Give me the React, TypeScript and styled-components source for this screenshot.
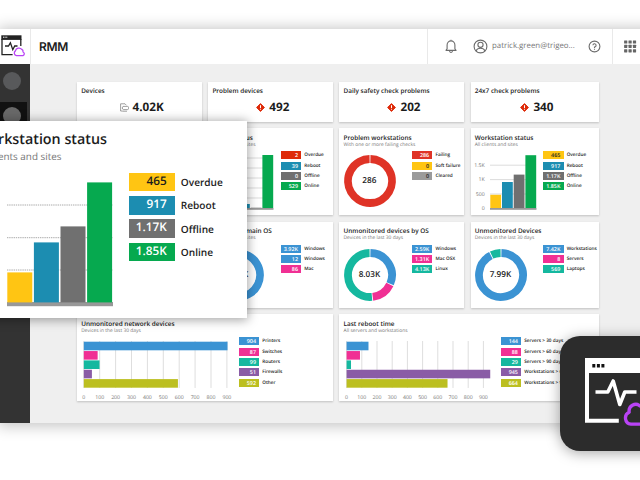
import React from "react";
import styled, { createGlobalStyle } from "styled-components";

const palette = {
  ink: "#1c1c1c",
  blue: "#3b93d3",
  teal: "#1c8db1",
  gray: "#707070",
  silver: "#9b9b9b",
  green: "#06a94f",
  yellow: "#ffc513",
  red: "#df3326",
  alert: "#de2b0a",
  pink: "#f03094",
  mint: "#15b89f",
  purple: "#8a5ca6",
  olive: "#bcbf20",
  brand: "#b943f5",
};

const GlobalStyle = createGlobalStyle`
  html, body { margin: 0; padding: 0; overflow: hidden; background: #fff; }
  * { box-sizing: border-box; }
  svg { display: block; flex: none; }
`;

const Page = styled.div`
  position: relative;
  width: 640px;
  height: 480px;
  padding-top: 28.5px;
  overflow: hidden;
  background: #fff;
  color: ${palette.ink};
  font-family: "Open Sans", "Noto Sans", sans-serif;
  text-rendering: geometricPrecision;
`;

const Window = styled.div`
  width: 660px;
  height: 394px;
  display: flex;
  flex-direction: column;
  background: #efefef;
  box-shadow: 0 1px 14px 2px rgba(0, 0, 0, 0.24);
`;

const TopBar = styled.header`
  display: flex;
  align-items: stretch;
  height: 35.5px;
  width: 640px;
  background: #fff;
`;

const LogoCell = styled.div`
  width: 31px;
  padding-top: 5.5px;
  border-right: 1px solid #e9e9e9;
`;

const AppName = styled.h1`
  flex: 1;
  margin: 0;
  padding-left: 8px;
  line-height: 35.5px;
  font-family: Inter, "Open Sans", sans-serif;
  font-size: 12px;
  font-weight: 600;
  letter-spacing: -0.3px;
`;

const Account = styled.div`
  display: flex;
  align-items: center;
  width: 185px;
  padding: 0 11px 0 16px;
  border-left: 1px solid #e9e9e9;
`;

const Email = styled.span`
  flex: 1;
  margin-left: 4.3px;
  font-size: 7.85px;
  color: #777;
  white-space: nowrap;
`;

const AppsCell = styled.div`
  display: flex;
  align-items: center;
  width: 28px;
  padding-left: 11px;
  border-left: 1px solid #e9e9e9;
`;

const Main = styled.div`
  display: flex;
  flex: 1;
  min-height: 0;
`;

const Sidebar = styled.nav`
  width: 30px;
  background: #333;
`;

const NavItem = styled.div<{ $active?: boolean }>`
  display: flex;
  align-items: ${(p) => (p.$active ? "flex-start" : "center")};
  width: 27px;
  height: ${(p) => (p.$active ? "30px" : "37.5px")};
  padding: ${(p) => (p.$active ? "5px 0 0 3px" : "0 0 4px 3px")};
  background: ${(p) => (p.$active ? "#111" : "transparent")};
`;

const NavDot = styled.span<{ $active?: boolean }>`
  width: 18px;
  height: 18px;
  border-radius: 50%;
  background: ${(p) => (p.$active ? "#696969" : "#58595b")};
`;

const Dashboard = styled.main`
  display: grid;
  grid-template-columns: 125px 125px 125px 128.5px;
  grid-template-rows: 40px 87px 86.5px 86.5px;
  gap: 6.3px 6.2px;
  padding: 18px 0 0 47.1px;
`;

const Card = styled.section<{ $wide?: boolean }>`
  grid-column: span ${(p) => (p.$wide ? 2 : 1)};
  min-width: 0;
  padding: 4.3px 0 0 4.1px;
  background: #fff;
  box-shadow: 0 0.5px 2px rgba(0, 0, 0, 0.2);
`;

const CardTitle = styled.h2`
  margin: 0;
  height: 9px;
  line-height: 9px;
  font-size: 6.4px;
  font-weight: 600;
  white-space: nowrap;
`;

const CardNote = styled.p`
  margin: 0;
  height: 6px;
  line-height: 6px;
  font-size: 4.9px;
  color: #777;
  white-space: nowrap;
`;

const Figure = styled.div`
  display: flex;
  align-items: center;
  justify-content: center;
  gap: 4px;
  height: 24px;
  font-size: 11.7px;
  font-weight: 700;
`;

const CardBody = styled.div`
  display: flex;
  padding-top: 2.7px;
`;

const LegendList = styled.ul`
  display: grid;
  gap: 2.3px;
  align-content: start;
  margin: 0;
  padding: 1px 0 0;
  list-style: none;
`;

const LegendRow = styled.li`
  display: flex;
  align-items: center;
  gap: 3px;
  height: 8px;
  font-size: 4.7px;
  font-weight: 600;
  line-height: 8px;
  white-space: nowrap;
`;

const Chip = styled.span<{ $color: string; $dark?: boolean }>`
  width: 20.3px;
  height: 8px;
  padding-right: 3.3px;
  text-align: right;
  font-size: 5.4px;
  background: ${(p) => p.$color};
  color: ${(p) => (p.$dark ? "#222" : "#fff")};
`;

const ChartText = styled.text`
  font-size: 5.2px;
  fill: #777;
`;

const DonutText = styled.text`
  font-size: 8.2px;
  font-weight: 600;
  fill: #1c1c1c;
  text-anchor: middle;
`;

const Callout = styled.section`
  position: absolute;
  top: 121px;
  left: -46px;
  width: 292.5px;
  height: 197px;
  padding: 9px 0 0 16px;
  background: #fff;
  box-shadow: 0 1px 10px 1px rgba(0, 0, 0, 0.36);
`;

const CalloutTitle = styled.h2`
  display: flex;
  justify-content: flex-end;
  margin: 0;
  width: 137px;
  height: 20px;
  line-height: 20px;
  font-size: 14.3px;
  font-weight: 600;
  white-space: nowrap;
`;

const CalloutNote = styled.p`
  display: flex;
  justify-content: flex-end;
  margin: 0;
  width: 91.5px;
  height: 13px;
  line-height: 13px;
  font-size: 9.9px;
  color: #777;
  white-space: nowrap;
`;

const CalloutBody = styled.div`
  display: flex;
  gap: 15px;
  padding: 9.9px 0 0 37px;
`;

const CalloutLegend = styled.ul`
  display: grid;
  gap: 4.9px;
  align-content: start;
  margin: 0;
  padding: 0;
  list-style: none;
`;

const CalloutRow = styled.li`
  display: flex;
  align-items: center;
  gap: 6px;
  height: 18.4px;
  font-size: 10.1px;
  font-weight: 600;
`;

const CalloutChip = styled.span<{ $color: string; $dark?: boolean }>`
  width: 46.3px;
  height: 18.4px;
  padding-right: 8px;
  line-height: 17px;
  text-align: right;
  font-size: 11.8px;
  background: ${(p) => p.$color};
  color: ${(p) => (p.$dark ? "#1c1c1c" : "#fff")};
`;

const Badge = styled.div`
  position: absolute;
  left: 560px;
  top: 336px;
  width: 116px;
  height: 114.5px;
  padding: 22px 0 0 24.5px;
  border-radius: 20px;
  background: #2c2c2c;
  box-shadow: 0 2px 14px rgba(0, 0, 0, 0.35);
`;

type LegendItem = { value: string; label: string; color: string; dark?: boolean };

function Legend({ items }: { items: LegendItem[] }) {
  return (
    <LegendList>
      {items.map((it, i) => (
        <LegendRow key={i}>
          <Chip $color={it.color} $dark={it.dark}>{it.value}</Chip>
          {it.label}
        </LegendRow>
      ))}
    </LegendList>
  );
}

type PanelProps = {
  title: string;
  note: string;
  legend: LegendItem[];
  wide?: boolean;
  children: React.ReactNode;
};

function Panel({ title, note, legend, wide, children }: PanelProps) {
  return (
    <Card $wide={wide}>
      <CardTitle>{title}</CardTitle>
      <CardNote>{note}</CardNote>
      <CardBody>
        {children}
        <Legend items={legend} />
      </CardBody>
    </Card>
  );
}

type Slice = { from: number; to: number; color: string };

function Donut({ label, slices }: { label: string; slices: Slice[] }) {
  const point = (t: number) => {
    const a = t * Math.PI * 2;
    return `${26 + 22 * Math.sin(a)} ${31 - 22 * Math.cos(a)}`;
  };
  return (
    <svg width="68.6" height="60" viewBox="0 0 68.6 60" overflow="visible">
      {slices.map((s, i) => (
        <path
          key={i}
          d={`M${point(s.from + 0.003)} A22 22 0 ${s.to - s.from > 0.5 ? 1 : 0} 1 ${point(s.to - 0.003)}`}
          fill="none"
          stroke={s.color}
          strokeWidth="7.8"
        />
      ))}
      <DonutText x="25.4" y="33.2">{label}</DonutText>
    </svg>
  );
}

type Column = { height: number; color: string };

function ColumnChart({ columns, lines, labels }: { columns: Column[]; lines: number[]; labels?: string[] }) {
  return (
    <svg width="68.6" height="62" viewBox="0 0 68.6 62" overflow="visible">
      {lines.map((y) => (
        <path key={y} d={`M15 ${y}H61`} stroke="#d8d8d8" strokeWidth=".9" />
      ))}
      {labels?.map((t, i) => (
        <ChartText key={t} x="9.7" y={17 + i * 14.4} textAnchor="end">{t}</ChartText>
      ))}
      {columns.map((c, i) => (
        <rect key={i} x={15.3 + i * 11.7} y={58 - c.height} width="10.8" height={c.height} fill={c.color} />
      ))}
      <rect x="15" y="58" width="46.5" height="1.8" fill="#989898" />
    </svg>
  );
}

type BarProps = { values: number[]; scale: number; width: number; left: number };
const barColors = [palette.blue, palette.pink, palette.mint, palette.purple, palette.olive];

function BarChart({ values, scale, width, left }: BarProps) {
  return (
    <svg width={width} height="64" viewBox={`0 0 ${width} 64`} overflow="visible">
      {Array.from({ length: 10 }, (_, i) => (
        <g key={i}>
          <path d={`M${left + i * 100 * scale} 5V52`} stroke="#dedede" strokeWidth="1" />
          <ChartText x={left + i * 100 * scale} y="62.6" textAnchor="middle">{i * 100}</ChartText>
        </g>
      ))}
      {values.map((v, i) => (
        <rect key={i} x={left} y={5.7 + i * 9.35} width={v * scale} height="8.6" fill={barColors[i]} />
      ))}
    </svg>
  );
}

function Alert() {
  return (
    <svg width="9" height="9" viewBox="0 0 9 9">
      <path d="M4.5.6 8.4 4.5 4.5 8.4.6 4.5Z" fill={palette.alert} stroke={palette.alert} strokeWidth="1" strokeLinejoin="round" />
      <path d="M4.5 2.2V5M4.5 5.8V6.7" stroke="#fff" strokeWidth="1" />
    </svg>
  );
}

function DeviceIcon() {
  return (
    <svg width="9" height="9" viewBox="0 0 9 9" fill="none" stroke="#777" strokeWidth=".7">
      <path d="M2.4 8H.6V.8H5L6.4 2.3" />
      <path d="M3 3.4H7.5Q8.5 3.4 8.5 4.5V5.5Q8.5 6.6 7.5 6.6H3.2Q2.3 6.2 2.3 5Q2.3 3.7 3 3.4ZM2.4 8.2H7" />
    </svg>
  );
}

function BrandIcon() {
  return (
    <svg width="26" height="23" viewBox="0 0 26 23" fill="none">
      <rect x="1.3" y="1.3" width="20.2" height="4.6" fill="#222" />
      <path d="M3 3.2H7.3" stroke="#fff" strokeWidth="1" strokeDasharray="1.1 .5" />
      <path d="M12.6 20.7H2V5M20.8 5V12" stroke="#222" strokeWidth="1.3" />
      <path d="M5 12H8.5L10.4 8.7L12.8 15.7L14.7 12H17.5" stroke="#222" strokeWidth="1.3" />
      <path d="M16.5 21.6A2.6 2.6 0 0 1 15.4 16.9A3.7 3.7 0 0 1 21.8 15.4A2.3 2.3 0 0 1 23 18A1.9 1.9 0 0 1 23 21.6Z" stroke={palette.brand} strokeWidth="1.3" strokeLinejoin="round" />
    </svg>
  );
}

function BadgeIcon() {
  return (
    <svg width="80" height="70" viewBox="0 0 80 70" fill="none">
      <path d="M0 0H70V15H4V60.8H33.8V64.8H0Z" fill="#fff" />
      <path d="M7.3 6H10.3V9.6H7.3ZM11.9 6H14.9V9.6H11.9ZM16.4 6H19.4V9.6H16.4Z" fill="#111" />
      <path d="M10.5 34H22.8L28.2 23L34.8 46.5L39.8 34H51.5" stroke="#fff" strokeWidth="3.6" strokeLinejoin="round" />
      <path d="M46 66.2A6.3 6.3 0 0 1 44.2 54.2A6.6 6.6 0 0 1 55 48A8 8 0 0 1 68 54A6 6 0 0 1 67 66.2Z" stroke={palette.brand} strokeWidth="3.3" strokeLinejoin="round" />
    </svg>
  );
}

const BellIcon = styled.svg`
  margin-right: 14.7px;
`;

function HeaderBar() {
  return (
    <TopBar>
      <LogoCell><BrandIcon /></LogoCell>
      <AppName>RMM</AppName>
      <Account>
        <BellIcon width="14" height="15" viewBox="0 0 14 15" fill="none" stroke="#6b6b6b" strokeWidth="1.1">
          <path d="M2 11.4H12L10.9 9.8V6A3.9 4.1 0 0 0 3.1 6V9.8ZM5.3 12.2Q7 14.6 8.7 12.2M7 .8V2" strokeLinejoin="round" />
        </BellIcon>
        <svg width="15" height="15" viewBox="0 0 15 15" fill="none" stroke="#6b6b6b" strokeWidth="1.1">
          <circle cx="7.5" cy="7.5" r="6.4" />
          <circle cx="7.5" cy="5.8" r="2.6" />
          <path d="M3 12Q4 9.3 7.5 9.3T12 12" />
        </svg>
        <Email>patrick.green@trigeo...</Email>
        <svg width="13" height="13" viewBox="0 0 13 13" fill="none" stroke="#6b6b6b" strokeWidth="1.1">
          <circle cx="6.5" cy="6.5" r="5.4" />
          <path d="M4.9 5.2A1.6 1.6 0 1 1 6.5 7V8M6.5 8.7V9.7" />
        </svg>
      </Account>
      <AppsCell>
        <svg width="13" height="13" viewBox="0 0 13 13" fill="#666">
          {[0, 1, 2].map((r) => [0, 1, 2].map((c) => (
            <rect key={`${r}${c}`} x={0.1 + c * 4.4} y={0.4 + r * 4.4} width="3.2" height="3.2" rx=".4" />
          )))}
        </svg>
      </AppsCell>
    </TopBar>
  );
}

const workstationStatus: LegendItem[] = [
  { value: "465", label: "Overdue", color: palette.yellow, dark: true },
  { value: "917", label: "Reboot", color: palette.teal },
  { value: "1.17K", label: "Offline", color: palette.gray },
  { value: "1.85K", label: "Online", color: palette.green },
];

const stats = [
  { title: "Devices", value: "4.02K" },
  { title: "Problem devices", value: "492" },
  { title: "Daily safety check problems", value: "202" },
  { title: "24x7 check problems", value: "340" },
];

function StatusCallout() {
  const heights = [30, 60, 76, 120];
  return (
    <Callout>
      <CalloutTitle>Workstation status</CalloutTitle>
      <CalloutNote>All clients and sites</CalloutNote>
      <CalloutBody>
        <svg width="106.5" height="135" viewBox="0 0 106.5 135">
          <path d="M0 32H106M0 64.7H106M0 97H106" stroke="#aaa" strokeWidth="1" strokeDasharray="1.4 .8" />
          <rect x="0" y="129" width="106" height="4.2" fill="#989898" />
          {workstationStatus.map((s, i) => (
            <rect key={s.label} x={0.3 + i * 26.6} y={129.4 - heights[i]} width="25" height={heights[i]} fill={s.color} />
          ))}
        </svg>
        <CalloutLegend>
          {workstationStatus.map((s) => (
            <CalloutRow key={s.label}>
              <CalloutChip $color={s.color} $dark={s.dark}>{s.value}</CalloutChip>
              {s.label}
            </CalloutRow>
          ))}
        </CalloutLegend>
      </CalloutBody>
    </Callout>
  );
}

export default function App() {
  return (
    <Page>
      <GlobalStyle />
      <Window>
        <HeaderBar />
        <Main>
          <Sidebar>
            <NavItem><NavDot /></NavItem>
            <NavItem $active><NavDot $active /></NavItem>
          </Sidebar>
          <Dashboard>
            {stats.map((s, i) => (
              <Card key={s.title}>
                <CardTitle>{s.title}</CardTitle>
                <Figure>{i === 0 ? <DeviceIcon /> : <Alert />}{s.value}</Figure>
              </Card>
            ))}
            <Card />
            <Panel title="Server status" note="All clients and sites" legend={[
              { value: "2", label: "Overdue", color: palette.alert },
              { value: "39", label: "Reboot", color: palette.teal },
              { value: "0", label: "Offline", color: palette.gray },
              { value: "529", label: "Online", color: palette.green },
            ]}>
              <ColumnChart lines={[8, 18, 28, 38, 48]} columns={[
                { height: 0.3, color: palette.alert },
                { height: 4, color: palette.teal },
                { height: 0.3, color: palette.gray },
                { height: 53, color: palette.green },
              ]} />
            </Panel>
            <Panel title="Problem workstations" note="With one or more failing checks" legend={[
              { value: "286", label: "Failing", color: palette.red },
              { value: "0", label: "Soft failure", color: palette.yellow, dark: true },
              { value: "0", label: "Cleared", color: palette.silver, dark: true },
            ]}>
              <Donut label="286" slices={[{ from: 0, to: 1, color: palette.red }]} />
            </Panel>
            <Panel title="Workstation status" note="All clients and sites" legend={workstationStatus}>
              <ColumnChart lines={[15.2, 29.6, 44]} labels={["1.5K", "1K", "500", "0"]} columns={[
                { height: 13.2, color: palette.yellow },
                { height: 26, color: palette.teal },
                { height: 33.4, color: palette.gray },
                { height: 52.8, color: palette.green },
              ]} />
            </Panel>
            <Card />
            <Panel title="Servers by main OS" note="All clients and sites" legend={[
              { value: "3.92K", label: "Windows", color: palette.blue },
              { value: "12", label: "Windows", color: palette.blue },
              { value: "86", label: "Mac", color: palette.pink },
            ]}>
              <Donut label="4.02K" slices={[{ from: 0, to: 0.975, color: palette.blue }, { from: 0.975, to: 1, color: palette.pink }]} />
            </Panel>
            <Panel title="Unmonitored devices by OS" note="Devices in the last 30 days" legend={[
              { value: "2.59K", label: "Windows", color: palette.blue },
              { value: "1.31K", label: "Mac OSX", color: palette.pink },
              { value: "4.13K", label: "Linux", color: palette.mint },
            ]}>
              <Donut label="8.03K" slices={[
                { from: 0, to: 0.318, color: palette.blue },
                { from: 0.318, to: 0.483, color: palette.pink },
                { from: 0.483, to: 1, color: palette.mint },
              ]} />
            </Panel>
            <Panel title="Unmonitored Devices" note="Devices in the last 30 days" legend={[
              { value: "7.42K", label: "Workstations", color: palette.blue },
              { value: "8", label: "Servers", color: palette.pink },
              { value: "569", label: "Laptops", color: palette.mint },
            ]}>
              <Donut label="7.99K" slices={[
                { from: 0, to: 0.927, color: palette.blue },
                { from: 0.927, to: 1, color: palette.mint },
              ]} />
            </Panel>
            <Panel wide title="Unmonitored network devices" note="Devices in the last 30 days" legend={[
              { value: "904", label: "Printers", color: palette.blue },
              { value: "87", label: "Switches", color: palette.pink },
              { value: "99", label: "Routers", color: palette.mint },
              { value: "51", label: "Firewalls", color: palette.purple },
              { value: "592", label: "Other", color: palette.olive },
            ]}>
              <BarChart values={[904, 87, 99, 51, 592]} scale={0.159} width={157.8} left={2.8} />
            </Panel>
            <Panel wide title="Last reboot time" note="All servers and workstations" legend={[
              { value: "144", label: "Servers > 30 days", color: palette.blue },
              { value: "88", label: "Servers > 60 days", color: palette.pink },
              { value: "29", label: "Servers > 90 days", color: palette.mint },
              { value: "945", label: "Workstations > 60 days", color: palette.purple },
              { value: "664", label: "Workstations > 90 days", color: palette.olive },
            ]}>
              <BarChart values={[144, 88, 29, 945, 664]} scale={0.152} width={157.4} left={2.6} />
            </Panel>
          </Dashboard>
        </Main>
      </Window>
      <StatusCallout />
      <Badge><BadgeIcon /></Badge>
    </Page>
  );
}
